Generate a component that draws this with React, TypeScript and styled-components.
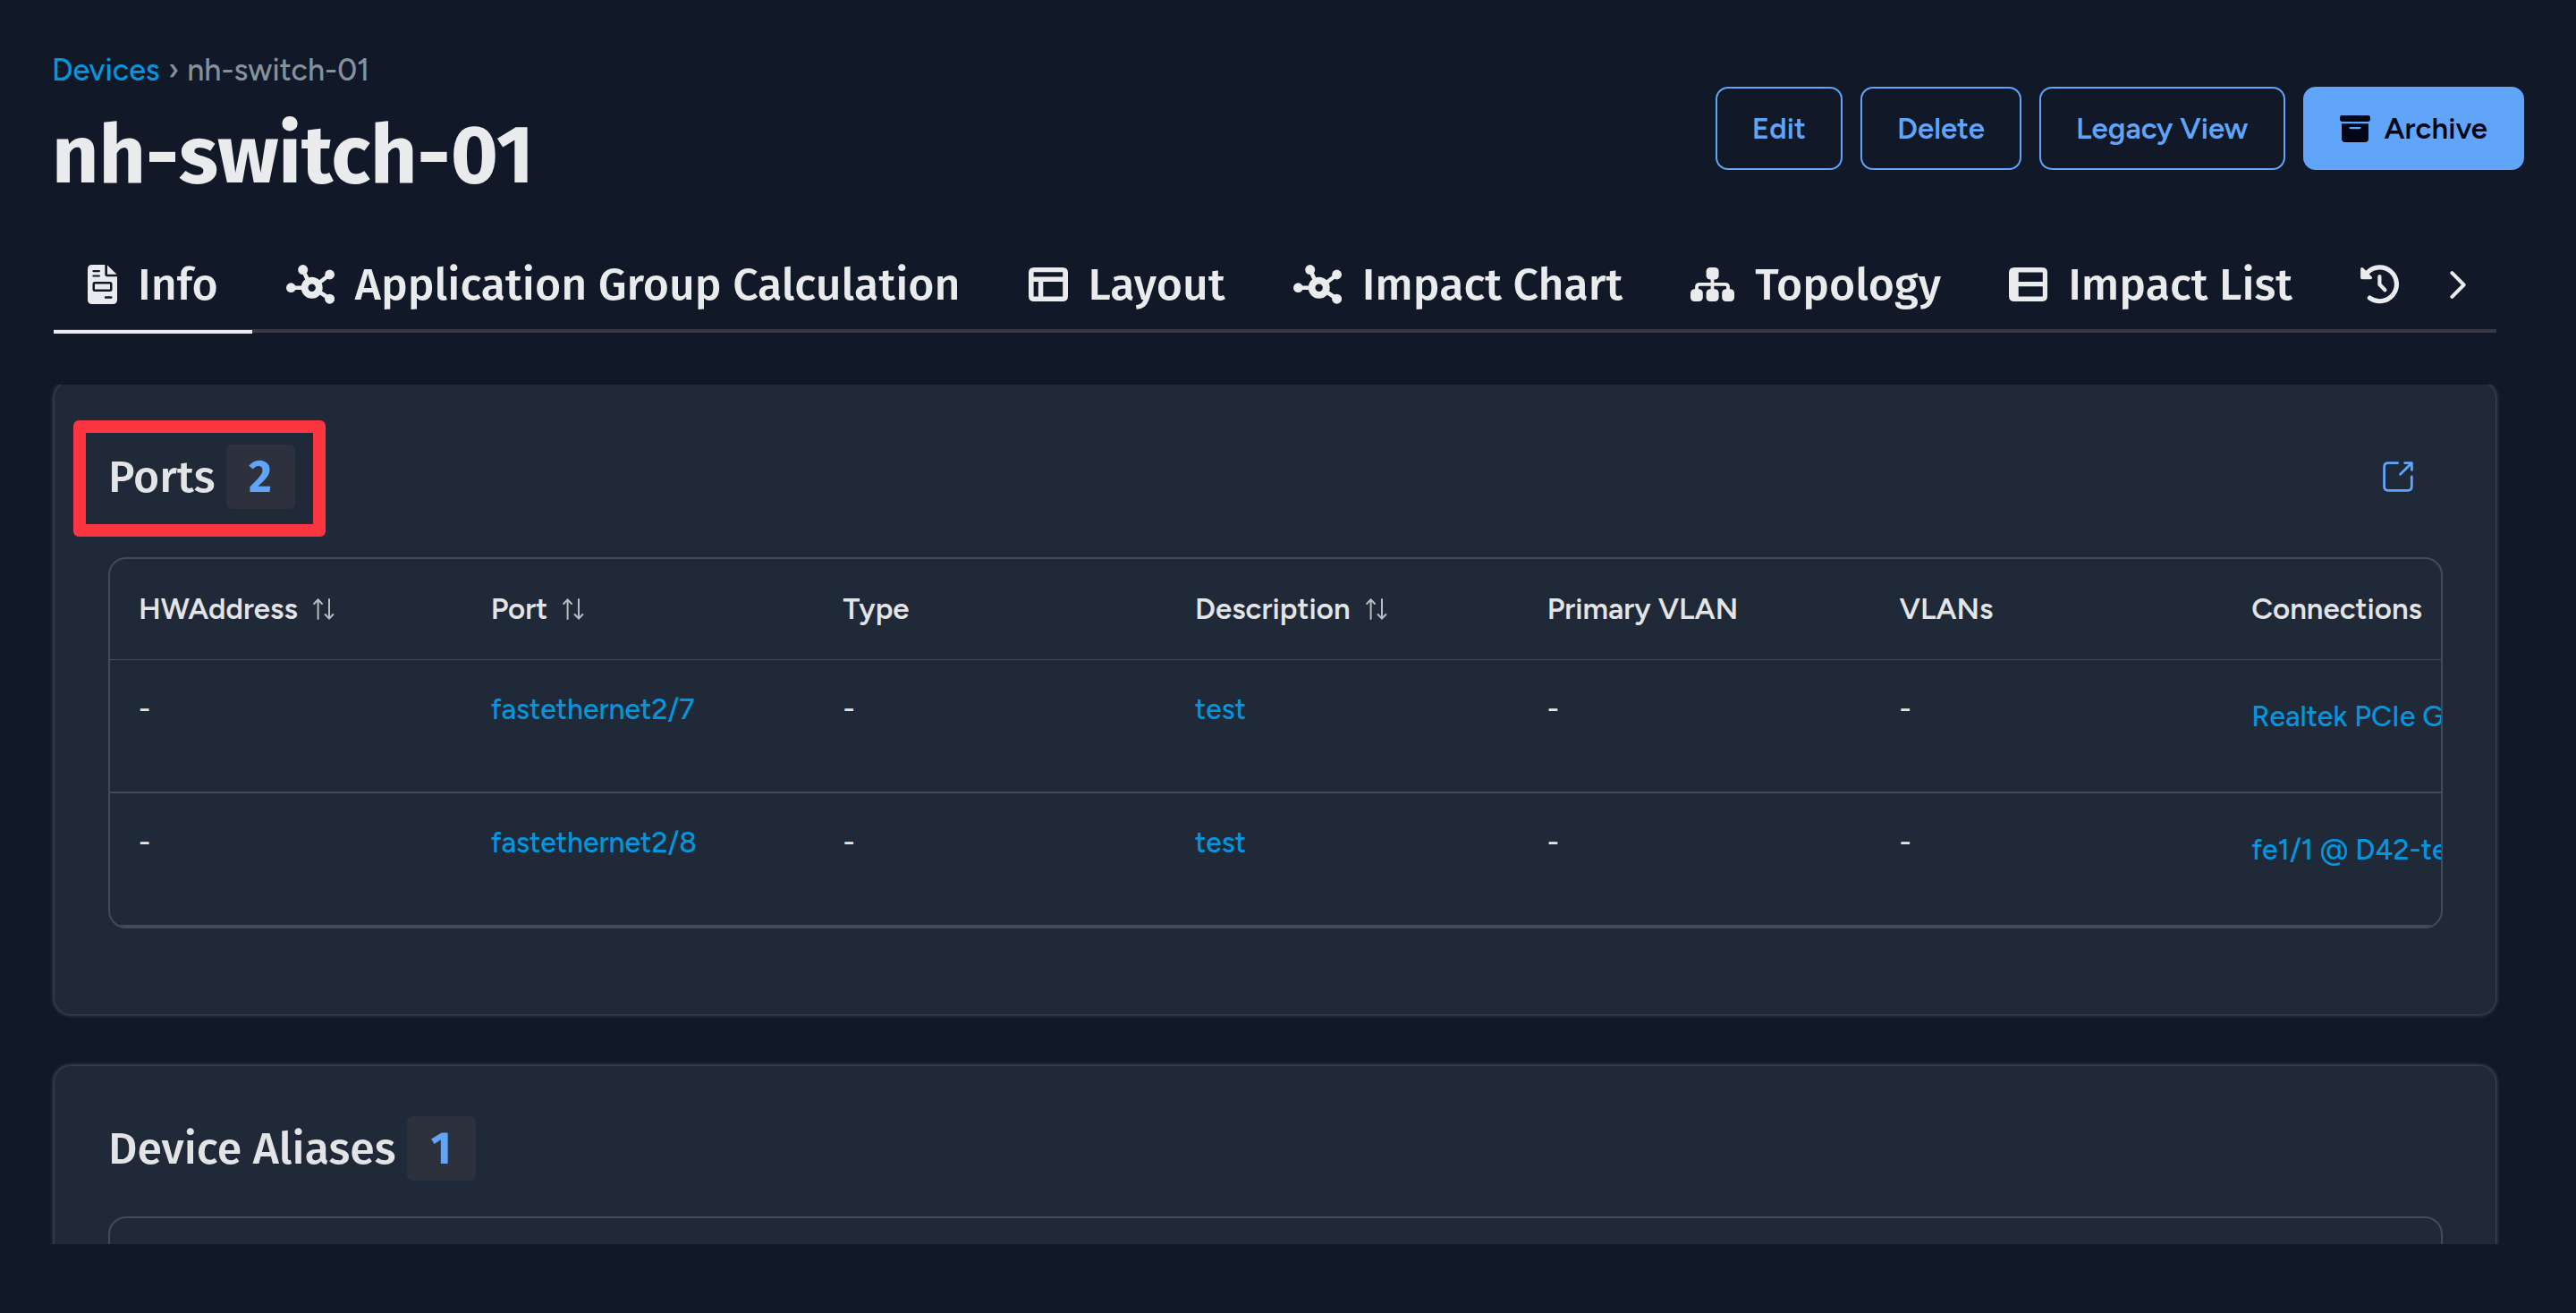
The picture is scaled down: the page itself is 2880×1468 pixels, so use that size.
import React from "react";
import styled, { createGlobalStyle } from "styled-components";

const color = {
  page: "#111827",
  card: "#1f2937",
  line: "#414b59",
  text: "#e3e4e6",
  heading: "#eaebed",
  muted: "#84929b",
  link: "#0396de",
  accent: "#60a5fa",
  badge: "#2c313d",
  mark: "#fb3640",
};

const display = `"Fira Sans", "Noto Sans", sans-serif`;
const body = `"Figtree", Inter, sans-serif`;

const GlobalStyle = createGlobalStyle`
  *, *::before, *::after { box-sizing: border-box; }
  body { margin: 0; background: ${color.page}; color: ${color.text}; font-family: ${body}; font-size: 33px; line-height: 48px; }
  svg { display: block; flex: none; }
`;

const Page = styled.div`
  display: flex;
  flex-direction: column;
  height: 100vh;
  padding-bottom: 77px;
  overflow: hidden;
`;

const Header = styled.header`
  display: flex;
  align-items: center;
  justify-content: space-between;
  padding: 57px 58px 38px;
`;

const HeaderText = styled.div`
  display: flex;
  flex-direction: column;
  gap: 17px;
`;

const Breadcrumb = styled.nav`
  display: flex;
  gap: 9px;
  font-size: 34px;
  line-height: 44px;
  font-weight: 500;
  color: ${color.muted};
`;

const Link = styled.a`
  color: ${color.link};
  text-decoration: none;
  white-space: nowrap;
`;

const Title = styled.h1`
  margin: 0;
  font: 700 91px/112px ${display};
  color: ${color.heading};
`;

const Actions = styled.div`
  display: flex;
  gap: 20px;
`;

const Button = styled.button<{ $primary?: boolean }>`
  display: flex;
  align-items: center;
  gap: 16px;
  height: 93px;
  padding: 0 39px;
  border: 2px solid ${color.accent};
  border-radius: 14px;
  background: ${(p) => (p.$primary ? color.accent : "transparent")};
  color: ${(p) => (p.$primary ? "#020617" : color.accent)};
  font: 600 33px/48px ${body};
`;

const Content = styled.main`
  display: flex;
  flex: 1;
  flex-direction: column;
  min-height: 0;
  margin: 0 89px 0 60px;
`;

const TabBar = styled.div`
  display: flex;
  flex: none;
  height: 104px;
  margin-bottom: 58px;
  border-bottom: 4px solid #373a45;
`;

const Tab = styled.button<{ $active?: boolean }>`
  position: relative;
  display: flex;
  flex: none;
  align-items: center;
  gap: 23px;
  padding: 0 38px;
  border: 0;
  background: none;
  color: ${color.heading};
  font: 500 50px/60px ${display};
  white-space: nowrap;

  &::after {
    content: "";
    position: absolute;
    inset: auto 0 -5px;
    height: 4px;
    background: ${(p) => (p.$active ? color.heading : "transparent")};
  }
`;

const NextTabs = styled.button`
  display: grid;
  flex: none;
  place-items: center;
  padding: 0 34px 0 0;
  margin-left: auto;
  border: 0;
  background: none;
  color: ${color.heading};
`;

const Scroller = styled.div`
  flex: 1;
  min-height: 0;
  margin: 0 -5px;
  padding: 0 6px;
  overflow: hidden;
`;

const CardList = styled.div`
  display: grid;
  grid-template-columns: minmax(0, 1fr);
  gap: 58px;
  margin-top: -3px;
`;

const Card = styled.section`
  padding: 56px 59px 96px 60px;
  border-radius: 18px;
  background: ${color.card};
  box-shadow: 0 0 4px 1px rgba(255, 255, 255, 0.28);
`;

const CardHeader = styled.div`
  display: flex;
  align-items: center;
  justify-content: space-between;
  margin-bottom: 40px;
`;

const CardTitle = styled.h2`
  position: relative;
  display: flex;
  align-items: center;
  gap: 12px;
  margin: 0;
  font: 500 50px/72px ${display};
`;

const Count = styled.span`
  width: 77px;
  border-radius: 6px;
  background: ${color.badge};
  color: ${color.accent};
  font-weight: 700;
  text-align: center;
`;

const Highlight = styled.span`
  position: absolute;
  inset: -27px -34px -31px -39px;
  border: 14px solid ${color.mark};
  border-radius: 6px;
`;

const OpenButton = styled.button`
  display: grid;
  place-items: center;
  width: 100px;
  height: 100px;
  padding: 0;
  border: 0;
  background: none;
  color: ${color.accent};
`;

const TableFrame = styled.div<{ $minHeight?: number }>`
  min-height: ${(p) => p.$minHeight ?? 0}px;
  border: 2px solid ${color.line};
  border-radius: 20px;
  overflow: hidden;
`;

const Table = styled.table`
  width: 100%;
  min-width: 2756px;
  table-layout: fixed;
  border-collapse: separate;
  border-spacing: 0;
`;

const Th = styled.th`
  height: 113px;
  padding: 0 32px;
  border-bottom: 1px solid ${color.line};
  font-weight: 600;
  text-align: left;
`;

const HeadLabel = styled.span`
  display: flex;
  align-items: center;
  gap: 17px;
  white-space: nowrap;
`;

const Td = styled.td<{ $nested?: boolean }>`
  height: 149px;
  padding: ${(p) => (p.$nested ? 39 : 31)}px 32px 0;
  border-bottom: 2px solid ${color.line};
  font-size: 32px;
  font-weight: 500;
  vertical-align: top;
  white-space: nowrap;
`;

const InfoIcon = () => (
  <svg width="33" height="44" viewBox="0 0 33 44" fill="currentColor" aria-hidden="true">
    <path
      fillRule="evenodd"
      d="M5 0H19.3V10.5Q19.3 13.2 22 13.2H33V39Q33 44 28 44H5Q0 44 0 39V5Q0 0 5 0ZM6.5 6Q5.3 6 5.3 7.1T6.5 8.2H12.8Q14 8.2 14 7.1T12.8 6ZM6.5 11.4Q5.3 11.4 5.3 12.5T6.5 13.6H12.8Q14 13.6 14 12.5T12.8 11.4ZM8 19Q5.5 19 5.5 21.5V27.5Q5.5 30 8 30H25Q27.5 30 27.5 27.5V21.5Q27.5 19 25 19ZM20 35.3Q18.8 35.3 18.8 36.5T20 37.7H26.3Q27.5 37.7 27.5 36.5T26.3 35.3Z"
    />
    <rect x="8" y="21.5" width="17" height="6" />
    <path d="M22 .6L32.6 10.8H22Z" />
  </svg>
);

const HubIcon = () => (
  <svg width="54" height="44" viewBox="0 0 54 44" fill="currentColor" stroke="currentColor" aria-hidden="true">
    <path d="M18.7 5.7L24 17M48.7 11L37 20M5.3 25.7H18M48.7 38L38 31" strokeWidth="4.6" fill="none" />
    <circle cx="28.7" cy="25.7" r="8.1" strokeWidth="7.8" fill="none" />
    <g stroke="none">
      <circle cx="18.7" cy="5.6" r="5.5" />
      <circle cx="48.6" cy="11" r="5.4" />
      <circle cx="5.4" cy="25.7" r="5.4" />
      <circle cx="48.6" cy="38.2" r="5.5" />
    </g>
  </svg>
);

const LayoutIcon = () => (
  <svg width="44" height="38" viewBox="0 0 44 38" fill="currentColor" aria-hidden="true">
    <path
      fillRule="evenodd"
      d="M6 0H38Q44 0 44 6V32Q44 38 38 38H6Q0 38 0 32V6Q0 0 6 0ZM5.6 5.2V10.6H38.2V5.2ZM5.6 15.9V32.5H10.9V15.9ZM16.3 15.9V32.5H38.2V15.9Z"
    />
  </svg>
);

const TopologyIcon = () => (
  <svg width="49" height="38" viewBox="0 0 49 38" fill="currentColor" aria-hidden="true">
    <rect x="17.6" width="14" height="13.6" rx="4.4" />
    <rect y="24.2" width="13.8" height="13.8" rx="4.4" />
    <rect x="17.6" y="24.2" width="14" height="13.8" rx="4.4" />
    <rect x="35.2" y="24.2" width="13.8" height="13.8" rx="4.4" />
    <path d="M24.5 12V26M7 26V22Q7 18.8 10.2 18.8H38.8Q42 18.8 42 22V26" fill="none" stroke="currentColor" strokeWidth="3.8" />
  </svg>
);

const ListIcon = () => (
  <svg width="43" height="38" viewBox="0 0 43 38" fill="currentColor" aria-hidden="true">
    <path
      fillRule="evenodd"
      d="M6 0H37Q43 0 43 6V32Q43 38 37 38H6Q0 38 0 32V6Q0 0 6 0ZM10.7 5.4V16H37.8V5.4ZM10.7 21.3V32.5H37.8V21.3Z"
    />
  </svg>
);

const HistoryIcon = () => (
  <svg width="43" height="44" viewBox="0 0 43 44" fill="none" stroke="currentColor" strokeLinecap="round" strokeLinejoin="round" aria-hidden="true">
    <path d="M10.4 37.1A18.9 18.9 0 1 0 8 8.6" strokeWidth="5.2" />
    <path d="M1.8 4.8V14.6H11.4Z" fill="currentColor" strokeWidth="3.4" />
    <path d="M21.4 13V22L27.4 28.2" strokeWidth="4.2" />
  </svg>
);

const ChevronIcon = () => (
  <svg width="18" height="31" viewBox="0 0 18 31" fill="none" stroke="currentColor" strokeWidth="4" strokeLinecap="round" strokeLinejoin="round" aria-hidden="true">
    <path d="M2.4 2.2L15.6 15.5L2.4 28.8" />
  </svg>
);

const ArchiveIcon = () => (
  <svg width="34" height="30" viewBox="0 0 34 30" fill="currentColor" aria-hidden="true">
    <rect width="34" height="7" rx="2.4" />
    <path
      fillRule="evenodd"
      d="M2 9.2H32V26Q32 30 28 30H6Q2 30 2 26ZM11.6 13Q10.4 13 10.4 14.1T11.6 15.2H22.4Q23.6 15.2 23.6 14.1T22.4 13Z"
    />
  </svg>
);

const OpenIcon = () => (
  <svg width="34" height="34" viewBox="0 0 34 34" fill="none" stroke="currentColor" strokeWidth="2.8" strokeLinecap="round" strokeLinejoin="round" aria-hidden="true">
    <path d="M16.6 1.7H6Q1.6 1.7 1.6 6V28Q1.6 32.3 6 32.3H28Q32.3 32.3 32.3 28V17" />
    <path d="M19.6 14.2L32 2M24.6 1.6H32.4V9.4" />
  </svg>
);

const SortIcon = () => (
  <svg width="24" height="24" viewBox="0 0 24 24" fill="none" stroke="#b9bdc2" strokeWidth="2" strokeLinecap="round" aria-hidden="true">
    <path d="M5.6 23V1.4M1.2 6L5.6 1.4L10 6M18 1V22.6M13.6 18L18 22.6L22.4 18" />
  </svg>
);

const tabs = [
  { label: "Info", Icon: InfoIcon },
  { label: "Application Group Calculation", Icon: HubIcon },
  { label: "Layout", Icon: LayoutIcon },
  { label: "Impact Chart", Icon: HubIcon },
  { label: "Topology", Icon: TopologyIcon },
  { label: "Impact List", Icon: ListIcon },
];

const columns = [
  { label: "HWAddress", sortable: true },
  { label: "Port", sortable: true },
  { label: "Type" },
  { label: "Description", sortable: true },
  { label: "Primary VLAN" },
  { label: "VLANs" },
  { label: "Connections" },
];

const ports = [
  { port: "fastethernet2/7", description: "test", connection: "Realtek PCIe GbE" },
  { port: "fastethernet2/8", description: "test", connection: "fe1/1 @ D42-test" },
];

export default function App() {
  return (
    <Page>
      <GlobalStyle />
      <Header>
        <HeaderText>
          <Breadcrumb aria-label="Breadcrumb">
            <Link href="#devices">Devices</Link>
            <span>›</span>
            <span>nh-switch-01</span>
          </Breadcrumb>
          <Title>nh-switch-01</Title>
        </HeaderText>
        <Actions>
          <Button type="button">Edit</Button>
          <Button type="button">Delete</Button>
          <Button type="button">Legacy View</Button>
          <Button type="button" $primary>
            <ArchiveIcon />
            Archive
          </Button>
        </Actions>
      </Header>
      <Content>
        <TabBar role="tablist">
          {tabs.map(({ label, Icon }, i) => (
            <Tab key={label} type="button" role="tab" aria-selected={i === 0} $active={i === 0}>
              <Icon />
              {label}
            </Tab>
          ))}
          <Tab type="button" role="tab" aria-label="History">
            <HistoryIcon />
          </Tab>
          <NextTabs type="button" aria-label="More tabs">
            <ChevronIcon />
          </NextTabs>
        </TabBar>
        <Scroller>
          <CardList>
            <Card>
              <CardHeader>
                <CardTitle>
                  Ports
                  <Count>2</Count>
                  <Highlight />
                </CardTitle>
                <OpenButton type="button" aria-label="Open ports">
                  <OpenIcon />
                </OpenButton>
              </CardHeader>
              <TableFrame>
                <Table>
                  <thead>
                    <tr>
                      {columns.map((c) => (
                        <Th key={c.label} scope="col">
                          <HeadLabel>
                            {c.label}
                            {c.sortable && <SortIcon />}
                          </HeadLabel>
                        </Th>
                      ))}
                    </tr>
                  </thead>
                  <tbody>
                    {ports.map((row) => (
                      <tr key={row.port}>
                        <Td>-</Td>
                        <Td><Link href="#port">{row.port}</Link></Td>
                        <Td>-</Td>
                        <Td><Link href="#description">{row.description}</Link></Td>
                        <Td>-</Td>
                        <Td>-</Td>
                        <Td $nested><Link href="#connection">{row.connection}</Link></Td>
                      </tr>
                    ))}
                  </tbody>
                </Table>
              </TableFrame>
            </Card>
            <Card>
              <CardHeader>
                <CardTitle>
                  Device Aliases
                  <Count>1</Count>
                </CardTitle>
              </CardHeader>
              <TableFrame $minHeight={260} />
            </Card>
          </CardList>
        </Scroller>
      </Content>
    </Page>
  );
}
